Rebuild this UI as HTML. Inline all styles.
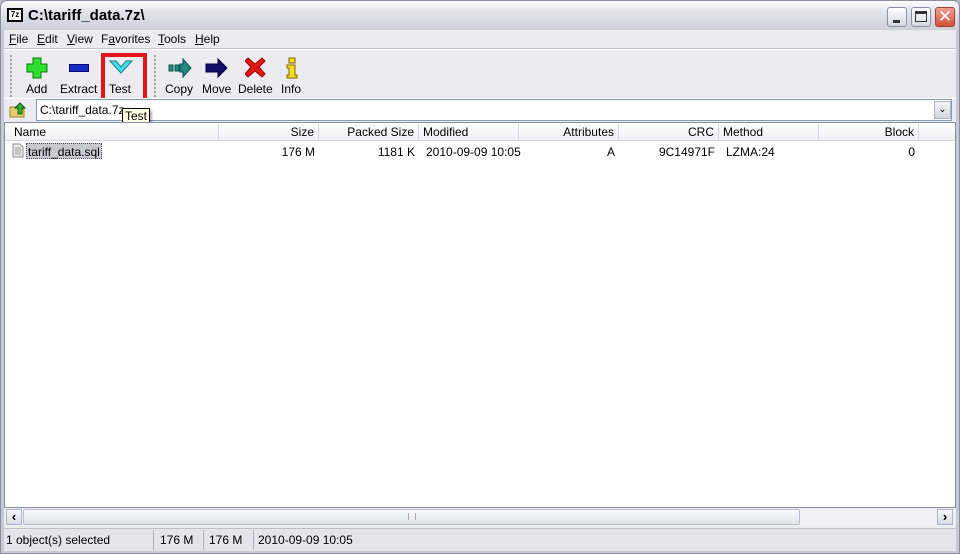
<!DOCTYPE html>
<html><head><meta charset="utf-8"><style>
*{margin:0;padding:0;box-sizing:border-box}
body{width:960px;height:554px;overflow:hidden;background:#b9b9c6;font-family:"Liberation Sans",sans-serif;font-size:12px;color:#000;position:relative}
.a{position:absolute}
#title{left:0;top:0;width:960px;height:30px;background:linear-gradient(#fbfbfd,#e2e2ea 40%,#cfcfda);border-radius:7px 7px 0 0;border:1px solid #8c8ca0;border-bottom:none}
#title .t{left:27px;top:6px;font-size:15px;font-weight:bold;color:#000}
#frame{left:0;top:30px;width:960px;height:524px;background:#c9c9d5;border-left:1px solid #8c8ca0;border-right:1px solid #8c8ca0;border-bottom:1px solid #8c8ca0}
#inner{left:4px;top:30px;width:952px;height:520px;background:#ebebf0}
.btn{width:20px;height:20px;top:6px;border:1px solid #8a8ea8;border-radius:3px;background:linear-gradient(#fff,#d6d8e4)}
.menu span{position:absolute;top:32px;font-size:12px}
.tb{top:82px;font-size:12px;text-align:center}
.col{top:124px;height:16px;border-right:1px solid #d6d6dc;font-size:12px;padding:1px 4px 0;text-align:right}
.cell{top:145px;font-size:12px}
</style></head><body>
<div class="a" id="frame"></div>
<div class="a" id="inner"></div>
<div class="a" id="title">
 <div class="a" style="left:6px;top:7px;width:16px;height:14px;background:#000;border:1px solid #000"><div class="a" style="left:1px;top:1px;width:12px;height:10px;background:#fff;font-size:8px;font-weight:bold;line-height:10px;text-align:center">7z</div></div>
 <div class="a t">C:\tariff_data.7z\</div>
 <div class="a btn" style="left:886px"><div class="a" style="left:5px;top:12px;width:7px;height:3px;background:#333"></div></div>
 <div class="a btn" style="left:910px"><div class="a" style="left:3px;top:3px;width:12px;height:11px;border:1px solid #333;border-top:3px solid #333"></div></div>
 <div class="a btn" style="left:934px;background:linear-gradient(#f0a090,#d0503a);border-color:#a04030;color:#fff;font-size:17px;line-height:18px;text-align:center">✕</div>
</div>
<div class="menu">
 <span style="left:9px"><u>F</u>ile</span><span style="left:37px"><u>E</u>dit</span><span style="left:67px"><u>V</u>iew</span><span style="left:101px">F<u>a</u>vorites</span><span style="left:158px"><u>T</u>ools</span><span style="left:195px"><u>H</u>elp</span>
</div>
<div class="a" style="left:4px;top:49px;width:952px;height:1px;background:#fff"></div>
<div class="a" style="left:4px;top:48px;width:952px;height:1px;background:#c6c6ce"></div>
<div class="a" style="left:10px;top:55px;width:2px;height:42px;border-left:2px dotted #9a9aa6"></div>
<div class="a" style="left:154px;top:55px;width:2px;height:42px;border-left:2px dotted #9a9aa6"></div>
<svg class="a" style="left:26px;top:57px" width="22" height="22"><path d="M7 1h8v6h6v8h-6v6h-8v-6h-6v-8h6z" fill="#2ee02e" stroke="#0a7a0a"/></svg>
<div class="a tb" style="left:26px">Add</div>
<svg class="a" style="left:69px;top:64px" width="20" height="8"><rect x="0.5" y="0.5" width="19" height="7" fill="#1428c8" stroke="#0a0a70"/></svg>
<div class="a tb" style="left:60px">Extract</div>
<svg class="a" style="left:109px;top:60px" width="24" height="14"><path d="M1 1l11 12 11-12h-6l-5 6-5-6z" fill="#40e0f0" stroke="#108090"/></svg>
<div class="a tb" style="left:109px">Test</div>
<div class="a" style="left:101px;top:53px;width:46px;height:50px;border:4px solid #e0161a"></div>
<svg class="a" style="left:168px;top:58px" width="24" height="20"><path d="M1 7h4v6h-4z M7 7h4v6h-4z M12 6h3v-5l8 9-8 9v-5h-3z" fill="#208a80" stroke="#0a5050"/></svg>
<div class="a tb" style="left:165px">Copy</div>
<svg class="a" style="left:205px;top:58px" width="24" height="20"><path d="M1 6h12v-5l9 9-9 9v-5h-12z" fill="#10106a" stroke="#000040"/></svg>
<div class="a tb" style="left:202px">Move</div>
<svg class="a" style="left:245px;top:57px" width="21" height="21"><path d="M3 1l7 6 7-6 3 3-6 6 6 7-3 3-7-6-7 6-3-3 6-7-6-6z" fill="#e01818" stroke="#900"/></svg>
<div class="a tb" style="left:238px">Delete</div>
<svg class="a" style="left:286px;top:57px" width="12" height="22"><rect x="3" y="1" width="6" height="5" fill="#f0e020" stroke="#806000"/><path d="M1 8h8v10h2v3h-10v-3h2v-7h-2z" fill="#f0e020" stroke="#806000"/></svg>
<div class="a tb" style="left:281px">Info</div>
<div class="a" style="left:4px;top:98px;width:952px;height:1px;background:#fff"></div>
<svg class="a" style="left:9px;top:101px" width="17" height="17"><path d="M1 6h6l2 2h6v8h-14z" fill="#e8d070" stroke="#a08020"/><path d="M9 13v-6h-3l5-5 5 5h-3v6z" fill="#30b030" stroke="#106010"/></svg>
<div class="a" style="left:36px;top:99px;width:916px;height:22px;background:#fff;border:1px solid #7f9db9"></div>
<div class="a" style="left:40px;top:103px;font-size:12px">C:\tariff_data.7z</div>
<div class="a" style="left:934px;top:101px;width:17px;height:18px;background:linear-gradient(#f4f4f8,#d4d6e0);border:1px solid #b0b4c8;text-align:center;font-size:10px;line-height:16px">&#8964;</div>
<div class="a" style="left:122px;top:108px;width:28px;height:16px;background:#ffffe1;border:1px solid #000;font-size:12px;padding-left:2px;line-height:14px;box-shadow:2px 2px 2px rgba(0,0,0,.3)">Test</div>
<div class="a" style="left:4px;top:122px;width:952px;height:386px;background:#fff;border:1px solid #8c8ca0"></div>
<div class="a" style="left:5px;top:123px;width:950px;height:18px;background:linear-gradient(#fff,#f0f0f4);border-bottom:1px solid #d6d6dc"></div>
<div class="a col" style="left:5px;width:214px;text-align:left;padding-left:9px">Name</div>
<div class="a col" style="left:219px;width:100px">Size</div>
<div class="a col" style="left:319px;width:100px">Packed Size</div>
<div class="a col" style="left:419px;width:100px;text-align:left">Modified</div>
<div class="a col" style="left:519px;width:100px">Attributes</div>
<div class="a col" style="left:619px;width:100px">CRC</div>
<div class="a col" style="left:719px;width:100px;text-align:left">Method</div>
<div class="a col" style="left:819px;width:100px">Block</div>
<svg class="a" style="left:12px;top:143px" width="12" height="15"><path d="M1 1h7l3 3v10h-10z" fill="#e8e8e8" stroke="#909090"/><path d="M3 5h6M3 7h6M3 9h6M3 11h6" stroke="#a0a0a0"/></svg>
<div class="a" style="left:26px;top:143px;width:76px;height:16px;background:#c8c8d0;border:1px dotted #555"></div>
<div class="a cell" style="left:28px">tariff_data.sql</div>
<div class="a cell" style="left:219px;width:96px;text-align:right">176 M</div>
<div class="a cell" style="left:319px;width:96px;text-align:right">1181 K</div>
<div class="a cell" style="left:426px">2010-09-09 10:05</div>
<div class="a cell" style="left:519px;width:96px;text-align:right">A</div>
<div class="a cell" style="left:619px;width:96px;text-align:right">9C14971F</div>
<div class="a cell" style="left:726px">LZMA:24</div>
<div class="a cell" style="left:819px;width:96px;text-align:right">0</div>
<div class="a" style="left:5px;top:509px;width:950px;height:17px;background:#f0f0f4"></div>
<div class="a" style="left:6px;top:509px;width:16px;height:16px;border:1px solid #b0b4c8;background:linear-gradient(#f8f8fa,#d8dae4);font-size:13px;text-align:center;line-height:14px;font-weight:bold">‹</div>
<div class="a" style="left:23px;top:509px;width:777px;height:16px;border:1px solid #b8bccc;border-radius:2px;background:linear-gradient(#fbfbfd,#e0e2ea)"></div>
<div class="a" style="left:408px;top:513px;width:8px;height:7px;border-left:1px solid #aaa;border-right:1px solid #aaa"></div>
<div class="a" style="left:937px;top:509px;width:16px;height:16px;border:1px solid #b0b4c8;background:linear-gradient(#f8f8fa,#d8dae4);font-size:13px;text-align:center;line-height:14px;font-weight:bold">›</div>
<div class="a" style="left:4px;top:528px;width:952px;height:23px;background:#e4e4ea;border-top:1px solid #c0c0c8"></div>
<div class="a" style="left:6px;top:533px;font-size:12px">1 object(s) selected</div>
<div class="a" style="left:153px;top:530px;width:1px;height:20px;background:#b0b0b8"></div>
<div class="a" style="left:160px;top:533px;font-size:12px">176 M</div>
<div class="a" style="left:203px;top:530px;width:1px;height:20px;background:#b0b0b8"></div>
<div class="a" style="left:209px;top:533px;font-size:12px">176 M</div>
<div class="a" style="left:253px;top:530px;width:1px;height:20px;background:#b0b0b8"></div>
<div class="a" style="left:258px;top:533px;font-size:12px">2010-09-09 10:05</div>
</body></html>
